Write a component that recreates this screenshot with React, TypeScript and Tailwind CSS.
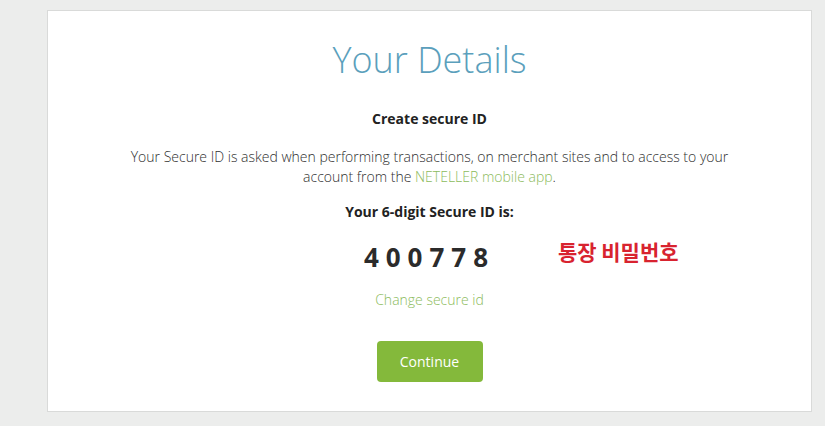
export default function App() {
  return (
    <div
      className="min-h-[426px] w-full bg-[#ecedec] pt-[10px] pl-[47px]"
      style={{ fontFamily: '"Open Sans", "Noto Sans CJK KR", sans-serif' }}
    >
      <div className="flex h-[402px] w-[765px] flex-col items-center border border-[#d9dad9] bg-white pt-[26px] text-center">
        <h1 className="text-[36px] leading-[46px] font-light text-[#5b9fbc]">Your Details</h1>

        <h2 className="mt-[26px] text-[14px] leading-[20px] font-bold text-[#222]">Create secure ID</h2>

        <p className="mt-[18px] max-w-[620px] text-[14px] leading-[20px] font-light text-[#2f2f2f]">
          Your Secure ID is asked when performing transactions, on merchant sites and to access to your{' '}
          account from the <span className="text-[#8cbb5c]">NETELLER mobile app</span>.
        </p>

        <h3 className="mt-[15px] text-[14px] leading-[20px] font-bold text-[#222]">Your 6-digit Secure ID is:</h3>

        <div className="relative mt-[17px]">
          <span className="text-[26px] leading-[36px] font-bold tracking-[7px] text-[#2b2b2b]">400778</span>
          <span
            className="absolute top-[-6px] left-[194px] text-[21px] leading-[36px] font-bold whitespace-nowrap text-[#d8232f]"
            style={{ fontFamily: '"Noto Sans CJK KR", sans-serif' }}
          >
            통장 비밀번호
          </span>
        </div>

        <a className="mt-[15px] text-[14px] leading-[20px] font-light text-[#8cbb5c]">Change secure id</a>

        <button className="mt-[31px] h-[41px] w-[106px] rounded-[4px] bg-[#84b93b] text-[14px] text-white">
          Continue
        </button>
      </div>
    </div>
  );
}
